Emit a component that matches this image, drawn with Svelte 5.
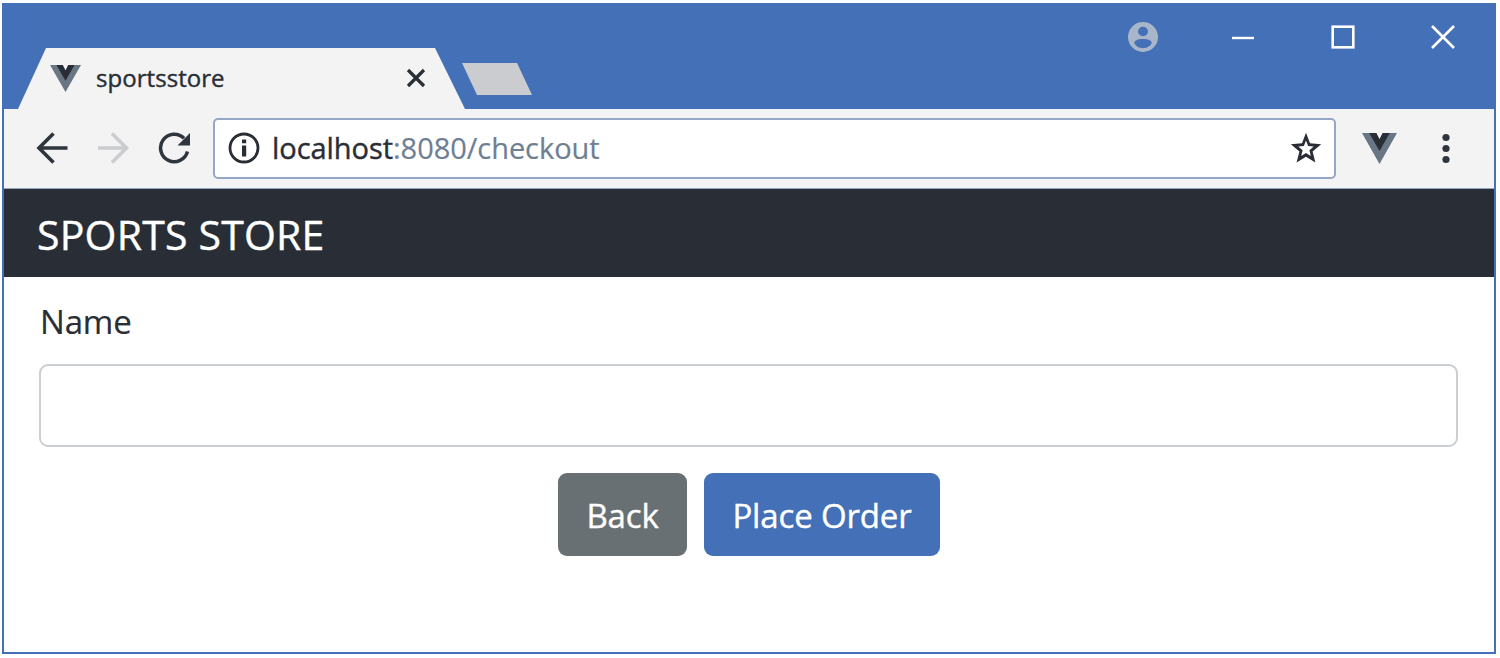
<script>
  let name = $state('');
</script>

{#snippet vue(w, h)}
  <svg width={w} height={h} viewBox="0 0 34 30" preserveAspectRatio="none">
    <path d="M0 0H13.500L17 6L20.500 0H34L17 30Z" fill="#697684" />
    <path d="M7 0H14L17 6L20 0H27L17 17.500Z" fill="#292e36" />
  </svg>
{/snippet}

<div class="window">
  <header class="titlebar">
    <div class="tab">
      {@render vue(31, 27)}
      <span class="title">sportsstore</span>
      <svg class="close" width="20" height="20" viewBox="0 0 20 20">
        <path d="M2 2L18 18M18 2L2 18" stroke="#292e36" stroke-width="3.200" />
      </svg>
    </div>
    <div class="newtab"></div>
    <div class="controls">
      <svg width="30" height="30" viewBox="0 0 30 30">
        <path fill="#a9b6c9" fill-rule="evenodd" d="M15 0a15 15 0 1 0 0 30a15 15 0 1 0 0-30ZM15 4.800a5 4.700 0 1 1 0 9.400a5 4.700 0 1 1 0-9.400ZM15 17C20 17 23.800 18.600 23.800 20.800C22.300 24.500 19 26.200 15 26.200S7.700 24.500 6.200 20.800C6.200 18.600 10 17 15 17Z" />
      </svg>
      <svg width="22" height="24" viewBox="0 0 22 24"><path d="M0 13H22" stroke="#fff" stroke-width="2.400" /></svg>
      <svg width="24" height="24" viewBox="0 0 24 24"><rect x="1.700" y="1.700" width="20.600" height="20.600" fill="none" stroke="#fff" stroke-width="2.600" /></svg>
      <svg width="24" height="24" viewBox="0 0 24 24"><path d="M1 1L23 23M23 1L1 23" stroke="#fff" stroke-width="2.600" /></svg>
    </div>
  </header>

  <div class="toolbar">
    <svg class="back" width="32" height="32" viewBox="0 0 32 32" fill="none" stroke="#2f353d" stroke-width="3.600">
      <path d="M31.500 16H3.500M17.500 1.500L3 16L17.500 30.500" />
    </svg>
    <svg class="forward" width="32" height="32" viewBox="0 0 32 32" fill="none" stroke="#cbccd0" stroke-width="3.600">
      <path d="M1 16H29M15 1.500L29.500 16L15 30.500" />
    </svg>
    <svg class="reload" width="32" height="32" viewBox="0 0 32 32">
      <path d="M29.500 19.500A13.700 13.700 0 1 1 26 6.300" fill="none" stroke="#2f353d" stroke-width="3.500" />
      <path d="M32 1V13.500H19.500Z" fill="#2f353d" />
    </svg>
    <div class="address">
      <svg width="32" height="32" viewBox="0 0 32 32">
        <circle cx="16" cy="16" r="14" fill="none" stroke="#292e36" stroke-width="2.800" />
        <path d="M14 7.500H18.200V11.200H14ZM14 13.500H18.200V24.500H14Z" fill="#292e36" />
      </svg>
      <span class="url"><span class="host">localhost</span><span class="path">:8080/checkout</span></span>
      <svg class="star" width="32" height="32" viewBox="0 0 32 32">
        <path fill="#292e36" fill-rule="evenodd" d="M16 .8L20 11.300L31.200 12.200L22.600 19.500L25.400 30.600L16 24.800L6.600 30.600L9.400 19.500L.8 12.200L12 11.300ZM16 8.500L13.900 14L8.300 14.500L12.600 18.200L11.200 24L16 21L20.800 24L19.400 18.200L23.700 14.500L18.100 14Z" />
      </svg>
    </div>
    <div class="ext">{@render vue(35, 31)}</div>
    <svg class="menu" width="8" height="32" viewBox="0 0 8 32" fill="#2f353d">
      <circle cx="4" cy="5.500" r="3.600" /><circle cx="4" cy="16.500" r="3.600" /><circle cx="4" cy="27.500" r="3.600" />
    </svg>
  </div>

  <nav class="brand"><span>SPORTS STORE</span></nav>

  <main>
    <label for="name">Name</label>
    <input id="name" bind:value={name} />
    <div class="actions">
      <button class="secondary"><span>Back</span></button>
      <button class="primary"><span>Place Order</span></button>
    </div>
  </main>
</div>

<style>
  :global(body) { margin: 0; background: #fff; }
  :global(#app) { display: flow-root; }
  * { box-sizing: border-box; }
  svg { display: block; flex: none; }
  .window {
    width: 1494px; height: 651px; margin: 3px 0 0 2px;
    border: 2px solid #4470b7; border-top: 0; background: #fff;
    font-family: "Open Sans", "Noto Sans", sans-serif; color: #292e36;
    overflow: hidden;
  }
  .titlebar {
    height: 106px; background: #4470b7; display: flex; align-items: flex-start;
  }
  .tab {
    width: 447px; height: 61px; margin: 45px 0 0 14px; padding: 0 39px 1px 32px;
    background: #f3f3f3; clip-path: polygon(28px 0, 417px 0, 447px 100%, 0 100%);
    display: flex; align-items: center;
  }
  .title { font-size: 24px; letter-spacing: 0.05px; margin-left: 15px; line-height: 30px; -webkit-text-stroke: 0.4px; }
  .close { margin-left: auto; }
  .newtab {
    width: 70px; height: 32px; margin: 60px 0 0 -3px; background: #cbccd0;
    clip-path: polygon(0 0, 55px 0, 100% 100%, 15px 100%);
  }
  .controls {
    margin: 19px 39px 0 auto; height: 30px; display: flex; align-items: center;
  }
  .controls svg:nth-child(2) { margin-left: 74px; }
  .controls svg:nth-child(3) { margin-left: 77px; }
  .controls svg:nth-child(4) { margin-left: 76px; }
  .toolbar {
    height: 80px; background: #f3f3f3; border-bottom: 1px solid #92a5bd;
    display: flex; align-items: center; padding: 0 0 1px 32px;
  }
  .forward { margin-left: 29px; }
  .reload { margin-left: 29px; }
  .address {
    width: 1123px; height: 61px; margin-left: 23px; padding: 0 12px 0 13px;
    border: 2px solid #94a8c6; border-radius: 5px; background: #fff;
    display: flex; align-items: center;
  }
  .url { font-size: 29px; line-height: 40px; letter-spacing: -0.05px; margin-left: 12px; white-space: nowrap; }
  .host { -webkit-text-stroke: 0.4px; }
  .path { color: #6f7f93; -webkit-text-stroke: 0.2px; }
  .star { margin-left: auto; }
  .ext { margin-left: 26px; }
  .menu { margin-left: 45px; }
  .brand {
    height: 88px; background: #292e36; color: #fff; padding: 2px 0 0 33px;
    display: flex; align-items: center; font-size: 41px; line-height: 60px;
    letter-spacing: 0.2px; -webkit-text-stroke: 0.4px;
  }
  main { padding: 25px 35px 0 35px; }
  label { display: block; font-size: 33px; line-height: 40px; padding-left: 1px; letter-spacing: -0.2px; -webkit-text-stroke: 0.2px; }
  input {
    display: block; width: 1419px; height: 83px; margin-top: 22px; padding: 0 28px;
    border: 2px solid #cbced2; border-radius: 9px; font: inherit; font-size: 33px;
    color: inherit; background: #fff; outline: none;
  }
  .actions { display: flex; justify-content: center; gap: 17px; margin-top: 26px; }
  button {
    height: 83px; border: 0; border-radius: 9px; padding: 1px 0 0; color: #fff;
    font: inherit; font-size: 33px; letter-spacing: -0.15px; white-space: nowrap;
    -webkit-text-stroke: 0.4px;
    display: flex; align-items: center; justify-content: center;
  }
  .secondary { width: 129px; background: #697073; }
  .primary { width: 236px; background: #4470b7; }
</style>
